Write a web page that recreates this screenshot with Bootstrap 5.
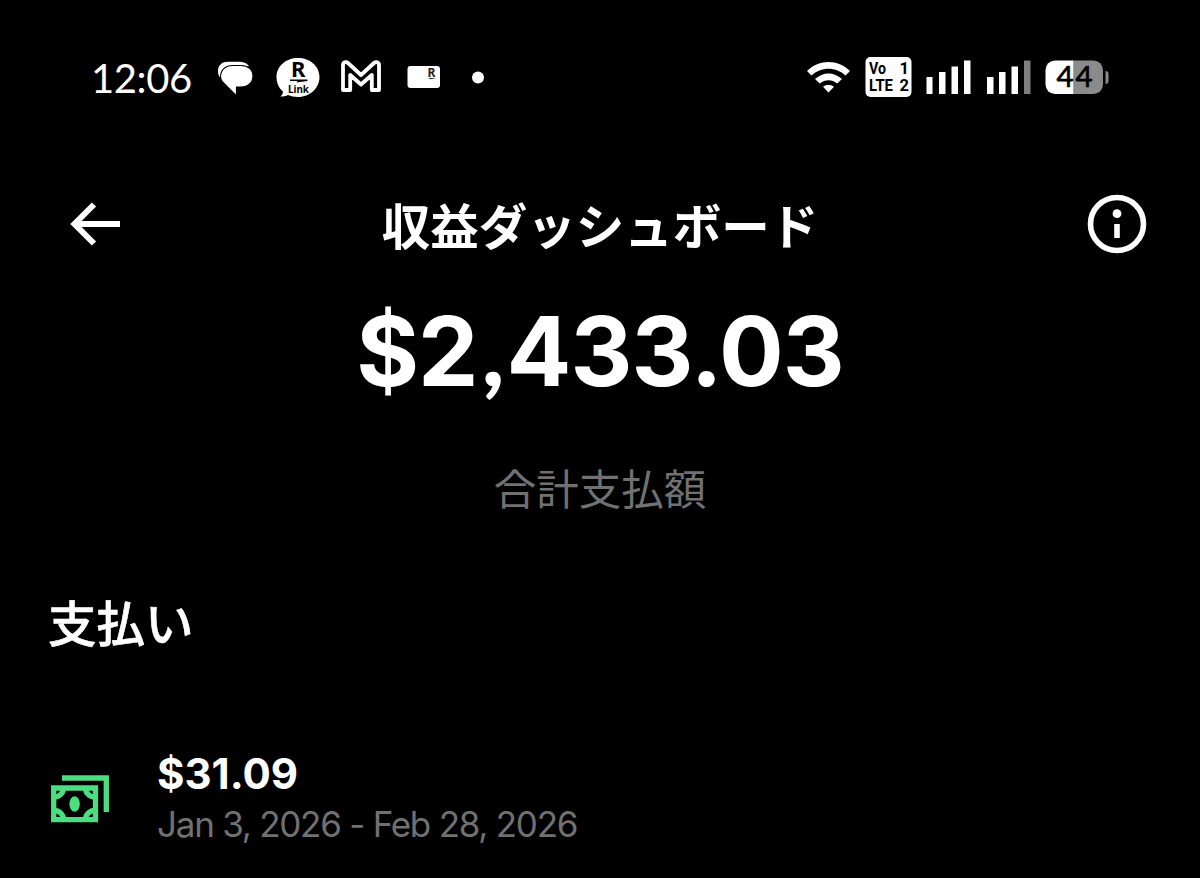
<!DOCTYPE html>
<html lang="ja">
  <head>
    <meta charset="UTF-8" />
    <meta name="viewport" content="width=device-width, initial-scale=1.0" />
    <title>収益ダッシュボード</title>
    <link
      rel="stylesheet"
      href="https://cdn.jsdelivr.net/npm/bootstrap@5.3.3/dist/css/bootstrap.min.css"
    />
    <script src="https://cdn.jsdelivr.net/npm/bootstrap@5.3.3/dist/js/bootstrap.bundle.min.js"></script>
    <style>
      body {
        background: #000;
        color: #fff;
        font-family: Inter, "Noto Sans CJK JP", sans-serif;
        overflow: hidden;
      }
      svg {
        display: block;
        flex: none;
      }
      .status-bar {
        height: 155px;
        padding-left: 91px;
        padding-right: 91px;
      }
      .clock {
        font-family: Lato, sans-serif;
        font-size: 40px;
        line-height: 48px;
        letter-spacing: -0.4px;
        width: 127px;
      }
      .top-bar {
        height: 138px;
        padding: 0 53px 0 70px;
      }
      .top-bar h1 {
        font-size: 48.5px;
        font-weight: 700;
        line-height: 60px;
        padding: 8px 17px 0 0;
      }
      .amount {
        font-size: 96px;
        font-weight: 700;
        line-height: 112px;
        letter-spacing: -0.9px;
      }
      .amount span {
        font-family: Lato, sans-serif;
        font-weight: 900;
        margin: 0 3px 0 4px;
      }
      .dim {
        color: #717171;
      }
      .amount-label {
        font-size: 42.5px;
        font-weight: 400;
        line-height: 60px;
        margin-top: 53px;
      }
      .payouts {
        padding: 75px 48px 0;
      }
      .payouts h2 {
        font-size: 48.5px;
        font-weight: 500;
        line-height: 60px;
        -webkit-text-stroke: 0.6px #fff;
      }
      .payout {
        margin-top: 94px;
      }
      .payout-sum {
        font-size: 42px;
        font-weight: 700;
        line-height: 50px;
      }
      .payout-dates {
        font-size: 35px;
        line-height: 50px;
        letter-spacing: -1.25px;
      }
    </style>
  </head>

  <body>
    <header class="status-bar d-flex align-items-center justify-content-between">
      <div class="d-flex align-items-center">
        <div class="clock">12:06</div>
        <!-- messages, link, mail, card, more -->
        <svg width="270" height="65" viewBox="218 45 270 65" fill="#fff">
          <path d="M219.500 77c-1.200-2-1.500-4-1.500-6 0-6 4-9.300 10-9.300h10c5 0 8.500 1 11 4.300z" />
          <path d="M220.500 77c0-7 5-11.500 12-11.500h8.500c7 0 12 4 12 10.500S248 87 241 87h-4.500v9L223.500 83c-2-2-3-4-3-6z" stroke="#000" stroke-width="1.200" />
          <path d="M298 58c12 0 21.500 8 21.500 19S310 97 298 97c-4 0-7-.7-10-2-2 1-5 1.500-7.500 1.500 1.500-1.500 2.500-3 2.500-5-4.500-3.500-6.500-9-6.500-14.500C276.500 66 286 58 298 58z" />
          <text x="291" y="77" font-family="Noto Sans" font-size="22" font-weight="700" fill="#000" textLength="15">R</text>
          <path d="M290 79.500h17.500v1.500l-11 1.500 1-1.500h-7.500z" fill="#000" />
          <text x="288" y="92.500" font-family="Noto Sans" font-size="11" font-weight="700" fill="#000" textLength="21" lengthAdjust="spacingAndGlyphs">Link</text>
          <path d="M343 90V65c0-2.800 3-3.800 5-2l13 12 13-12c2-1.800 5-.8 5 2v25h-7.200V75L361 84.500 350.200 75v15z" fill="none" stroke="#fff" stroke-width="3.800" stroke-linejoin="round" />
          <rect x="407.500" y="66" width="32.500" height="22" rx="3" />
          <text x="427.500" y="77" font-family="Noto Sans" font-size="12" font-weight="700" fill="#222">R</text>
          <path d="M428 78h8l-5 1.200z" fill="#222" />
          <circle cx="478" cy="77.500" r="6" />
        </svg>
      </div>
      <!-- wifi, volte, two signals, battery -->
      <svg width="303" height="65" viewBox="806 45 303 65" fill="#fff">
        <path d="M807 71c12-12 31-12 43 0l-4.500 4.500c-9.500-9-24.500-9-34 0z" />
        <path d="M815 79c8-7.500 19-7.500 27 0l-4.800 4.500c-5-4.500-12.400-4.500-17.400 0z" />
        <path d="M823 86.800c3.500-2.800 7.500-2.800 11 0l-5.500 5.700z" />
        <rect x="865.500" y="57" width="46" height="40" rx="5" />
        <g font-family="Roboto" font-size="16.500" font-weight="700" fill="#000">
          <text x="869" y="74" textLength="17" lengthAdjust="spacingAndGlyphs">Vo</text>
          <text x="899.500" y="74">1</text>
          <text x="869" y="91" textLength="24" lengthAdjust="spacingAndGlyphs">LTE</text>
          <text x="899.500" y="91">2</text>
        </g>
        <path d="M926.500 77h6v17h-6zM939 72h6.500v22H939zM951.500 66.500h6.500V94h-6.500zM964 60.500h6.500V94H964z" />
        <path d="M987 77h6.500v17H987zM999 72h6.500v22H999zM1011.500 66.500h6.500V94h-6.500z" />
        <path d="M1024 60.500h6.500V94h-6.500z" fill="#7f7f7f" />
        <path d="M1073.500 60.500h20a9.500 9.500 0 0 1 9.500 9.500v14.500a9.500 9.500 0 0 1-9.500 9.500h-20z" fill="#8b8b8b" />
        <path d="M1055 60.500h18.500V94H1055a9.500 9.500 0 0 1-9.500-9.500V70a9.500 9.500 0 0 1 9.500-9.500z" />
        <path d="M1105.500 71c2 0 3 1 3 3v7c0 2-1 3-3 3z" fill="#8b8b8b" />
        <text x="1056.500" y="86.500" font-family="Lato" font-size="29.500" font-weight="400" fill="#000" stroke="#000" stroke-width=".7" textLength="36">44</text>
      </svg>
    </header>

    <nav class="top-bar d-flex align-items-center justify-content-between">
      <svg width="60" height="50" viewBox="70 199 60 50" fill="none" stroke="#fff" stroke-width="6">
        <path d="M120 224H75M94 204.500 74.500 224 94 243.500" />
      </svg>
      <h1 class="m-0">収益ダッシュボード</h1>
      <svg width="60" height="60" viewBox="1087 194 60 60" fill="#fff">
        <circle cx="1117" cy="224" r="26.500" fill="none" stroke="#fff" stroke-width="5.600" />
        <circle cx="1117" cy="213.700" r="4.400" />
        <path d="M1114.200 224h5.600v14h-5.600z" />
      </svg>
    </nav>

    <main>
      <section class="text-center">
        <div class="amount">$2<span>,</span>433.03</div>
        <div class="amount-label dim">合計支払額</div>
      </section>

      <section class="payouts">
        <h2 class="m-0">支払い</h2>
        <div class="payout d-flex align-items-center">
          <svg width="109" height="50" viewBox="48 774 109 50" fill="none" stroke="#4ade80" stroke-width="5.300">
            <path d="M62 778h44.300v34" />
            <path d="M53.700 788h41.800v31.700H53.700z" />
            <path d="M63.500 788c0 5-4 9-9.500 9M85.500 788c0 5 4 9 9.500 9M63.500 819.500c0-5-4-9-9.500-9M85.500 819.500c0-5 4-9 9.500-9" />
            <ellipse cx="74.600" cy="804" rx="5.200" ry="7.800" fill="#4ade80" stroke="none" />
          </svg>
          <div>
            <div class="payout-sum">$31.09</div>
            <div class="payout-dates dim">Jan 3, 2026 - Feb 28, 2026</div>
          </div>
        </div>
      </section>
    </main>
  </body>
</html>
